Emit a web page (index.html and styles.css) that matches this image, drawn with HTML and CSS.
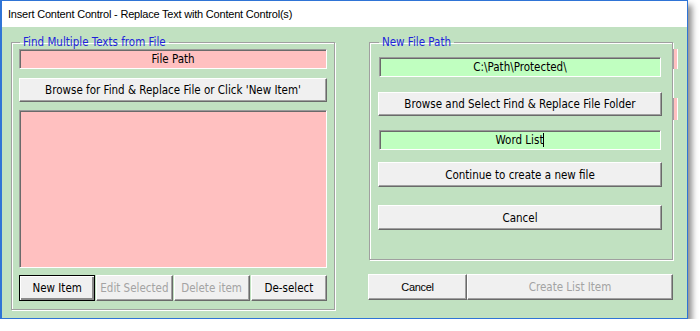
FILE: index.html
```html
<!DOCTYPE html>
<html lang="en">

<head>
  <meta charset="UTF-8" />
  <title>Insert Content Control</title>
  <link rel="stylesheet" href="styles.css">
</head>

<body>
  <div class="window">
    <div class="title-bar">Insert Content Control - Replace Text with Content Control(s)</div>

    <div class="client">
      <fieldset class="group group-left">
        <legend>Find Multiple Texts from File</legend>
        <div class="field field-pink">File Path</div>
        <button class="btn btn-browse">Browse for Find &amp; Replace File or Click 'New Item'</button>
        <div class="listbox"></div>
        <div class="btn-row">
          <button class="btn btn-default">New Item</button>
          <button class="btn" disabled>Edit Selected</button>
          <button class="btn" disabled>Delete item</button>
          <button class="btn">De-select</button>
        </div>
      </fieldset>

      <div class="right-col">
        <fieldset class="group group-right">
          <legend>New File Path</legend>
          <div class="field field-green path-field">C:\Path\Protected\</div>
          <button class="btn btn-wide folder-btn">Browse and Select Find &amp; Replace File Folder</button>
          <div class="field field-green word-field">Word List<span class="caret"></span></div>
          <button class="btn btn-wide continue-btn">Continue to create a new file</button>
          <button class="btn btn-wide cancel-btn">Cancel</button>
        </fieldset>

        <div class="bottom-row">
          <button class="btn btn-cancel">Cancel</button>
          <button class="btn btn-create" disabled>Create List Item</button>
        </div>
      </div>

      <!-- controls hidden behind the edge of the form -->
      <div class="slivers">
        <div class="sliver sliver-top"></div>
        <div class="sliver sliver-mid"></div>
      </div>
    </div>
  </div>
</body>

</html>
```

FILE: styles.css
```css
body {
  margin: 0;
  background: #fff;
  font-family: "DejaVu Sans Condensed", "DejaVu Sans", sans-serif;
  font-size: 11.5px;
  color: #000;
}

.window {
  width: 685px;
  height: 317px;
  border: 1px solid #2f74d6;
  border-left-width: 2px;
  background: #c1e1c1;
  box-shadow: 4px 5px 6px rgba(0, 0, 0, 0.45);
  display: flex;
  flex-direction: column;
  overflow: hidden;
}

.title-bar {
  height: 26px;
  line-height: 27px;
  padding-left: 6px;
  background: #fff;
  font-family: "Liberation Sans", sans-serif;
  font-size: 11px;
  letter-spacing: -0.2px;
  color: #000;
}

.client {
  display: flex;
  padding: 8px 0 0 9px;
}

/* group boxes */
.group {
  margin: 0;
  border: 1px solid #a0a0a0;
  box-shadow: 1px 1px 0 #fff, inset 1px 1px 0 #fff;
  min-width: 0;
  box-sizing: border-box;
  display: flex;
  flex-direction: column;
}

.group legend {
  padding: 0 3px;
  margin-left: 1px;
  line-height: 14px;
  height: 14px;
  color: #1f1fdc;
  font-size: 11.5px;
}

.group-left {
  width: 324px;
  height: 275px;
  padding: 0 7px 8px;
}

.group-right {
  width: 304px;
  height: 225px;
  padding: 0 10px 0 8px;
}

/* text fields */
.field {
  height: 20px;
  box-sizing: border-box;
  border-top: 1px solid #9a9a9a;
  border-left: 1px solid #9a9a9a;
  border-right: 1px solid #fff;
  border-bottom: 1px solid #fff;
  box-shadow: inset 1px 1px 0 #6a6a6a;
  text-align: center;
  line-height: 19px;
}

.field-pink {
  background: #ffc0c0;
}

.field-green {
  background: #c0ffc0;
  width: 282px;
  margin-left: 1px;
}

.caret {
  display: inline-block;
  width: 1px;
  height: 14px;
  background: #000;
  vertical-align: -3px;
}

.listbox {
  height: 158px;
  box-sizing: border-box;
  margin-top: 8px;
  background: #ffc0c0;
  border-top: 1px solid #9a9a9a;
  border-left: 1px solid #9a9a9a;
  border-right: 1px solid #fff;
  border-bottom: 1px solid #fff;
  box-shadow: inset 1px 1px 0 #6a6a6a;
}

/* buttons */
.btn {
  font: inherit;
  color: #000;
  background: #f0f0f0;
  border: 1px solid;
  border-color: #fff #6a6a6a #6a6a6a #fff;
  box-shadow: inset -1px -1px 0 #a0a0a0;
  padding: 0;
  margin: 0;
  box-sizing: border-box;
  flex-shrink: 0;
}

.btn:disabled {
  color: #a3a3a3;
}

.btn-browse {
  height: 24px;
  margin-top: 9px;
}

.btn-row {
  display: flex;
  margin-top: 7px;
  height: 26px;
}

.btn-row .btn {
  flex: 1;
  margin-right: 1px;
}

.btn-row .btn:last-child {
  margin-right: 0;
}

.btn-default {
  border: 1px solid #000;
  box-shadow: inset 1px 1px 0 #fff, inset -2px -2px 0 #8a8a8a;
}

.btn-wide {
  width: 284px;
}

.path-field {
  margin-top: 8px;
}

.folder-btn {
  height: 24px;
  margin-top: 15px;
}

.word-field {
  margin-top: 14px;
}

.continue-btn {
  height: 25px;
  margin-top: 12px;
}

.cancel-btn {
  height: 25px;
  margin-top: 18px;
}

.right-col {
  margin-left: 34px;
  display: flex;
  flex-direction: column;
}

.bottom-row {
  display: flex;
  margin-top: 14px;
  margin-left: -1px;
  height: 26px;
}

.btn-cancel {
  width: 99px;
  font-family: "Liberation Sans", sans-serif;
  font-size: 11px;
  letter-spacing: -0.3px;
}

.btn-create {
  width: 206px;
}

.slivers {
  display: flex;
  flex-direction: column;
}

.sliver {
  width: 3px;
  background: #ffc0c0;
  border-right: 1px solid #fff;
  border-left: 1px solid #a0a0a0;
}

.sliver-top {
  height: 20px;
  margin-top: 14px;
}

.sliver-mid {
  height: 22px;
  margin-top: 29px;
}
```
